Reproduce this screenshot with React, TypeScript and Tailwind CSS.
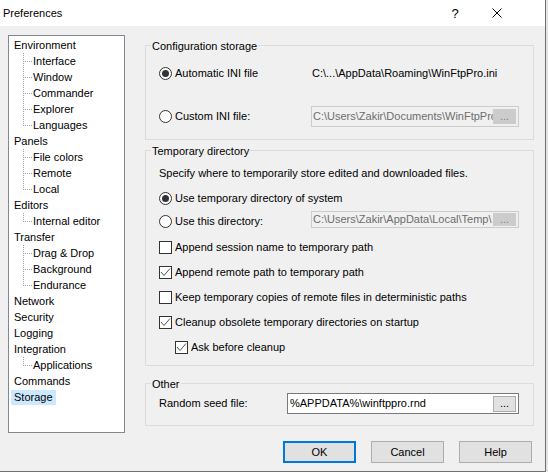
import React from "react";

type Node = { t: string; c?: string[]; sel?: boolean };

const tree: Node[] = [
  { t: "Environment", c: ["Interface", "Window", "Commander", "Explorer", "Languages"] },
  { t: "Panels", c: ["File colors", "Remote", "Local"] },
  { t: "Editors", c: ["Internal editor"] },
  { t: "Transfer", c: ["Drag & Drop", "Background", "Endurance"] },
  { t: "Network" },
  { t: "Security" },
  { t: "Logging" },
  { t: "Integration", c: ["Applications"] },
  { t: "Commands" },
  { t: "Storage", sel: true },
];

function Radio({ checked }: { checked?: boolean }) {
  return (
    <span className="w-[13px] h-[13px] rounded-full border border-[#333333] bg-white flex items-center justify-center shrink-0">
      {checked && <span className="w-[7px] h-[7px] rounded-full bg-[#333333]" />}
    </span>
  );
}

function Check({ checked }: { checked?: boolean }) {
  return (
    <span className="w-[13px] h-[13px] border border-[#333333] bg-white shrink-0 flex items-center justify-center">
      {checked && (
        <svg width="11" height="11" viewBox="0 0 11 11">
          <path d="M1 5 L4 8.5 L10 1.5" fill="none" stroke="#555555" strokeWidth="1" />
        </svg>
      )}
    </span>
  );
}

function Group({ title, className, children }: { title: string; className?: string; children: React.ReactNode }) {
  return (
    <div className={`border border-[#dcdcdc] ${className ?? ""}`}>
      <div className="-mt-[6px] ml-[5px] w-fit px-[1px] bg-[#f0f0f0] leading-[13px]">{title}</div>
      {children}
    </div>
  );
}

function DisabledInput({ text, h, bh }: { text: string; h: string; bh: string }) {
  return (
    <div className={`w-[208px] ${h} border border-[#cccccc] bg-[#f0f0f0] flex items-center pl-[1px] pr-[2px]`}>
      <span className="flex-1 min-w-0 overflow-hidden whitespace-nowrap text-[#6d6d6d]">{text}</span>
      <span className={`w-[23px] ${bh} bg-[#cccccc] text-[#838383] flex items-center justify-center shrink-0 leading-none`}>...</span>
    </div>
  );
}

function TreeConnector({ last }: { last: boolean }) {
  return (
    <svg width="10" height="16" viewBox="0 0 10 16" className="shrink-0">
      <line x1="0.5" y1="0" x2="0.5" y2={last ? 9 : 16} stroke="#a0a0a0" strokeWidth="1" strokeDasharray="1 1" />
      <line x1="2" y1="8.5" x2="10" y2="8.5" stroke="#a0a0a0" strokeWidth="1" strokeDasharray="1 1" />
    </svg>
  );
}

export default function App() {
  return (
    <div className="w-[548px] h-[472px] bg-[#e4e4e4] flex font-['Liberation_Sans',Arial,sans-serif] text-[11px] leading-[13px] text-black">
      <div className="w-[546px] h-[472px] border-r border-b border-[#707070] bg-[#f0f0f0] flex flex-col shrink-0">
        {/* Title bar */}
        <div className="h-[26px] bg-white flex items-center shrink-0">
          <span className="pl-[3px]">Preferences</span>
          <div className="flex-1" />
          <span className="w-[30px] text-center text-[13px] leading-none mr-[4px]">?</span>
          <span className="w-[46px] flex items-center justify-center">
            <svg width="10" height="10" viewBox="0 0 10 10">
              <path d="M0.5 0.5 L9.5 9.5 M9.5 0.5 L0.5 9.5" stroke="#000" strokeWidth="1" />
            </svg>
          </span>
          <div className="w-[25px]" />
        </div>

        {/* Body */}
        <div className="flex pl-[8px] pt-[9px]">
          {/* Tree */}
          <div className="w-[117px] h-[398px] border border-[#828790] bg-white pt-[1px] shrink-0">
            {tree.map((n) => (
              <React.Fragment key={n.t}>
                <div className="h-[16px] flex items-center">
                  <span className={`ml-[2px] px-[3px] leading-[15px] ${n.sel ? "bg-[#cce8ff]" : ""}`}>{n.t}</span>
                </div>
                {n.c?.map((c, i) => (
                  <div key={c} className="h-[16px] flex items-center">
                    <div className="w-[14px] shrink-0" />
                    <TreeConnector last={i === n.c!.length - 1} />
                    <span>{c}</span>
                  </div>
                ))}
              </React.Fragment>
            ))}
          </div>

          {/* Right */}
          <div className="ml-[20px] w-[389px] flex flex-col">
            <Group title="Configuration storage" className="mt-[10px] pb-[12px]">
              <div className="pl-[13px]">
                <div className="mt-[9px] h-[22px] flex items-center">
                  <div className="w-[152px] flex items-center">
                    <Radio checked />
                    <span className="ml-[3px]">Automatic INI file</span>
                  </div>
                  <span className="ml-[1px]">C:\...\AppData\Roaming\WinFtpPro.ini</span>
                </div>
                <div className="mt-[22px] h-[21px] flex items-center">
                  <div className="w-[152px] flex items-center">
                    <Radio />
                    <span className="ml-[3px]">Custom INI file:</span>
                  </div>
                  <DisabledInput text="C:\Users\Zakir\Documents\WinFtpPro" h="h-[21px]" bh="h-[15px]" />
                </div>
              </div>
            </Group>

            <Group title="Temporary directory" className="mt-[10px] pb-[10px]">
              <div className="pl-[13px]">
                <div className="mt-[7px] h-[16px] flex items-center">
                  <span>Specify where to temporarily store edited and downloaded files.</span>
                </div>
                <div className="mt-[9px] h-[16px] flex items-center">
                  <Radio checked />
                  <span className="ml-[3px]">Use temporary directory of system</span>
                </div>
                <div className="mt-[5px] h-[17px] flex items-center">
                  <div className="w-[152px] flex items-center mt-[3px]">
                    <Radio />
                    <span className="ml-[3px]">Use this directory:</span>
                  </div>
                  <DisabledInput text="C:\Users\Zakir\AppData\Local\Temp\" h="h-[17px]" bh="h-[13px]" />
                </div>
                <div className="mt-[11px] h-[16px] flex items-center">
                  <Check />
                  <span className="ml-[3px]">Append session name to temporary path</span>
                </div>
                <div className="mt-[9px] h-[16px] flex items-center">
                  <Check checked />
                  <span className="ml-[3px]">Append remote path to temporary path</span>
                </div>
                <div className="mt-[9px] h-[16px] flex items-center">
                  <Check />
                  <span className="ml-[3px]">Keep temporary copies of remote files in deterministic paths</span>
                </div>
                <div className="mt-[9px] h-[16px] flex items-center">
                  <Check checked />
                  <span className="ml-[3px]">Cleanup obsolete temporary directories on startup</span>
                </div>
                <div className="mt-[9px] h-[16px] flex items-center pl-[16px]">
                  <Check checked />
                  <span className="ml-[3px]">Ask before cleanup</span>
                </div>
              </div>
            </Group>

            <Group title="Other" className="mt-[17px] pb-[11px]">
              <div className="pl-[13px] mt-[2px] h-[21px] flex items-center">
                <span className="w-[128px] shrink-0">Random seed file:</span>
                <div className="w-[232px] h-[21px] border border-[#7a7a7a] bg-white flex items-center pl-[2px] pr-[2px]">
                  <span className="flex-1 overflow-hidden whitespace-nowrap">%APPDATA%\winftppro.rnd</span>
                  <span className="w-[23px] h-[16px] bg-[#e1e1e1] border border-[#adadad] flex items-center justify-center shrink-0 leading-none">...</span>
                </div>
              </div>
            </Group>

            <div className="mt-[15px] flex justify-end gap-[15px] pr-[2px]">
              <button className="w-[73px] h-[22px] bg-[#e1e1e1] border-2 border-[#0078d7] flex items-center justify-center">OK</button>
              <button className="w-[73px] h-[22px] bg-[#e1e1e1] border border-[#adadad] flex items-center justify-center">Cancel</button>
              <button className="w-[73px] h-[22px] bg-[#e1e1e1] border border-[#adadad] flex items-center justify-center">Help</button>
            </div>
          </div>
        </div>
      </div>
    </div>
  );
}
